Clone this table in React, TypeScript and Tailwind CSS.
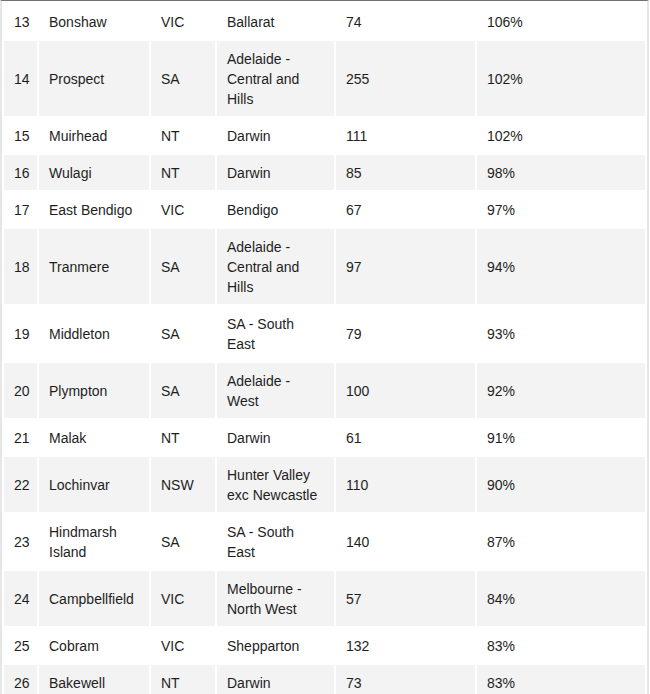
const rows: [string, string, string, string, string, string][] = [
  ['13', 'Bonshaw', 'VIC', 'Ballarat', '74', '106%'],
  ['14', 'Prospect', 'SA', 'Adelaide - Central and Hills', '255', '102%'],
  ['15', 'Muirhead', 'NT', 'Darwin', '111', '102%'],
  ['16', 'Wulagi', 'NT', 'Darwin', '85', '98%'],
  ['17', 'East Bendigo', 'VIC', 'Bendigo', '67', '97%'],
  ['18', 'Tranmere', 'SA', 'Adelaide - Central and Hills', '97', '94%'],
  ['19', 'Middleton', 'SA', 'SA - South East', '79', '93%'],
  ['20', 'Plympton', 'SA', 'Adelaide - West', '100', '92%'],
  ['21', 'Malak', 'NT', 'Darwin', '61', '91%'],
  ['22', 'Lochinvar', 'NSW', 'Hunter Valley exc Newcastle', '110', '90%'],
  ['23', 'Hindmarsh Island', 'SA', 'SA - South East', '140', '87%'],
  ['24', 'Campbellfield', 'VIC', 'Melbourne - North West', '57', '84%'],
  ['25', 'Cobram', 'VIC', 'Shepparton', '132', '83%'],
  ['26', 'Bakewell', 'NT', 'Darwin', '73', '83%'],
];

const widths = ['w-[33px]', 'w-[110px]', 'w-[64px]', 'w-[117px]', 'w-[139px]', 'w-[168px]'];

export default function App() {
  return (
    <div className="w-[650px] h-[694px] overflow-hidden bg-white">
      <div
        className="w-[649px] border-l-2 border-r-2 border-t border-[#e6e6e6] border-t-[#707070] pt-px"
        style={{ fontFamily: '"Liberation Sans", Arial, sans-serif' }}
      >
        <table className="w-[645px] table-fixed border-separate border-spacing-[2px] text-[14px] leading-[20px] text-[#1e1e1e]">
          <colgroup>
            {widths.map((w, i) => (
              <col key={i} className={w} />
            ))}
          </colgroup>
          <tbody>
            {rows.map((r, i) => (
              <tr key={r[0]} className={i % 2 === 1 ? 'bg-[#f3f3f3]' : 'bg-white'}>
                {r.map((c, j) => (
                  <td key={j} className="px-[10px] py-[7.5px] align-middle">
                    {c}
                  </td>
                ))}
              </tr>
            ))}
          </tbody>
        </table>
      </div>
    </div>
  );
}
